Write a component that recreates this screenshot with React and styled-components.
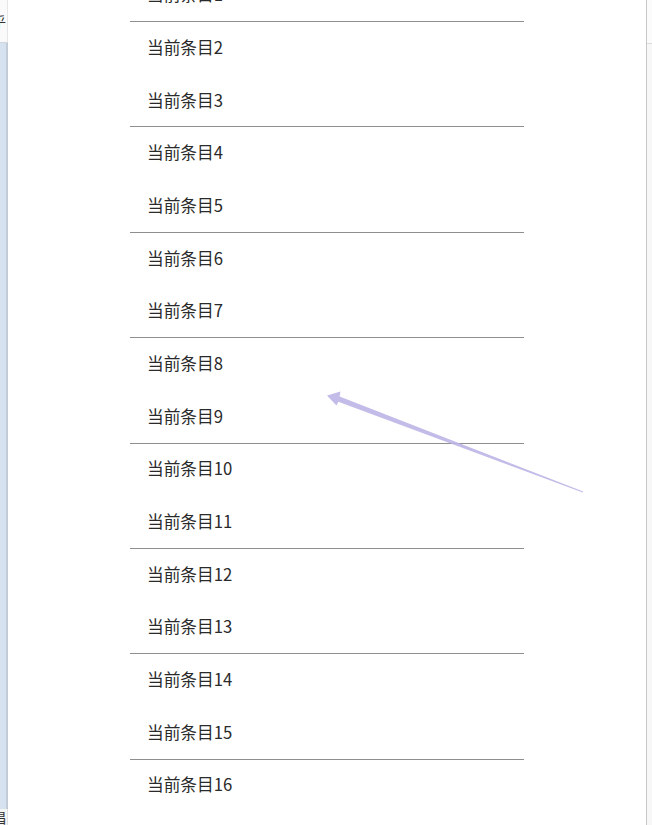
import React from 'react'
import styled, { createGlobalStyle } from 'styled-components'

const items = Array.from({ length: 17 }, (_, i) => `当前条目${i + 1}`)

export default function App() {
  return (
    <>
      <Global />
      <Screen>
        <LeftStrip>
          <StripTop>
            <StripGlyph>乎</StripGlyph>
          </StripTop>
          <StripBody />
          <StripBottom>
            <StripGlyph>唱</StripGlyph>
          </StripBottom>
        </LeftStrip>
        <Panel>
          <List>
            {items.map((text, i) => (
              <Item key={text} $divider={i % 2 === 1}>
                {text}
              </Item>
            ))}
          </List>
        </Panel>
        <RightStrip>
          <RightTop />
          <RightBody />
        </RightStrip>
        <Arrow width="652" height="825" viewBox="0 0 652 825">
          <polygon
            points="327,395.5 340.5,391.5 339.6,396.6 583.2,491.5 582.8,492.5 338.3,401.8 336.5,405.5"
            fill="#bdb4e6"
            fillOpacity="0.9"
          />
        </Arrow>
      </Screen>
    </>
  )
}

// styled components

const Global = createGlobalStyle`
  html, body {
    margin: 0;
    padding: 0;
    background: #fff;
    overflow: hidden;
  }
  body {
    font-family: "Noto Sans CJK SC", "Noto Sans", sans-serif;
  }
`

const Screen = styled.div`
  position: relative;
  display: flex;
  width: 652px;
  height: 825px;
  overflow: hidden;
`

const LeftStrip = styled.div`
  width: 8px;
  display: flex;
  flex-direction: column;
  flex-shrink: 0;
`

const StripTop = styled.div`
  height: 43px;
  background: #fafafa;
  border-right: 1px solid #e6e6e6;
  border-bottom: 1px solid #cfd5dc;
  box-sizing: border-box;
  overflow: hidden;
  display: flex;
  align-items: center;
  justify-content: flex-end;
`

const StripBody = styled.div`
  flex: 1;
  background: #d6e2ef;
  border-right: 2px solid #c3ccd6;
`

const StripBottom = styled.div`
  height: 16px;
  background: #f4f4f4;
  border-right: 1px solid #e0e0e0;
  overflow: hidden;
  display: flex;
  align-items: center;
  justify-content: flex-end;
`

const StripGlyph = styled.span`
  font-size: 14px;
  color: #333;
  line-height: 1;
  margin-right: 1px;
  white-space: nowrap;
  direction: rtl;
`

const Panel = styled.div`
  flex: 1;
  background: #fff;
  padding-left: 122px;
  overflow: hidden;
`

const List = styled.div`
  width: 394px;
  margin-top: -31.7px;
  display: flex;
  flex-direction: column;
`

const Item = styled.div`
  height: 52.7px;
  box-sizing: border-box;
  display: flex;
  align-items: center;
  padding: 0 0 2px 17px;
  font-size: 16.7px;
  color: #2a2a2a;
  border-top: 1px solid ${p => (p.$divider ? '#8e8e8e' : 'transparent')};
`

const RightStrip = styled.div`
  width: 6px;
  flex-shrink: 0;
  display: flex;
  flex-direction: column;
  border-left: 1px solid #c8c8c8;
  box-sizing: border-box;
`

const RightTop = styled.div`
  height: 43px;
  background: #fbfbfb;
  border-bottom: 1px solid #dcdcdc;
`

const RightBody = styled.div`
  flex: 1;
  background: #f7f7f7;
`

const Arrow = styled.svg`
  position: absolute;
  top: 0;
  left: 0;
  pointer-events: none;
`
